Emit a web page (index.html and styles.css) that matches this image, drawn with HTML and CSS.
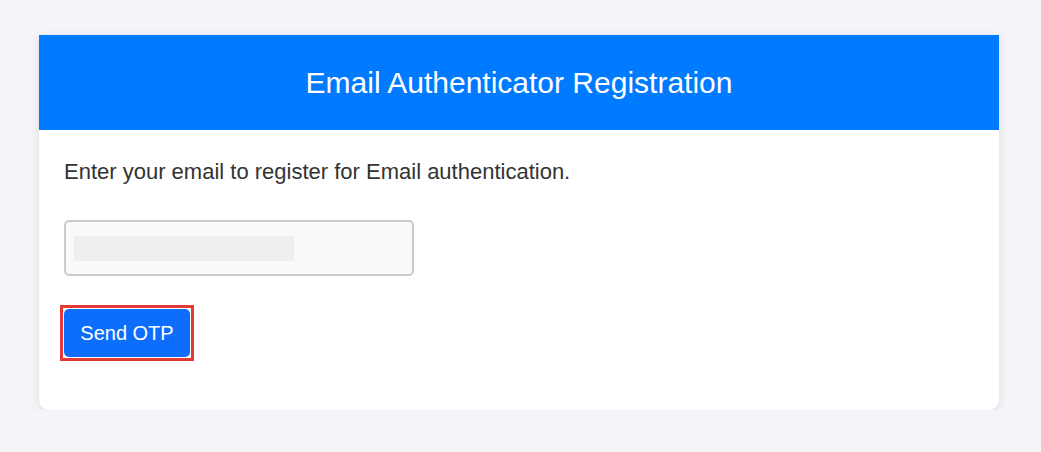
FILE: index.html
```html
<!DOCTYPE html>
<html lang="en">
<head>
<meta charset="utf-8">
<title>Email Authenticator Registration</title>
<link rel="stylesheet" href="styles.css">
</head>
<body>
<div class="card">
  <div class="card-header">
    <h2 class="title">Email Authenticator Registration</h2>
  </div>
  <div class="card-body">
    <p class="intro">Enter your email to register for Email authentication.</p>
    <div class="email-input"><span class="redacted"></span></div>
    <div class="btn-frame"><button class="btn" type="button">Send OTP</button></div>
  </div>
</div>
</body>
</html>
```
FILE: styles.css
```css
html, body {
  margin: 0;
  padding: 0;
}
body {
  background: #f4f4f9;
  font-family: "Liberation Sans", Arial, sans-serif;
  padding: 35px 42px 0 39px;
}
.card {
  width: 960px;
  height: 375px;
  background: #ffffff;
  border-radius: 0 0 10px 10px;
  box-shadow: 0 2px 10px rgba(0, 0, 0, 0.1);
}
.card-header {
  background: #007bff;
  height: 95px;
  display: flex;
  align-items: center;
  justify-content: center;
}
.title {
  margin: 0;
  color: #ffffff;
  font-weight: normal;
  font-size: 30px;
}
.card-body {
  padding: 27px 25px 0 25px;
}
.intro {
  margin: 0;
  font-size: 22px;
  color: #333333;
  line-height: 30px;
}
.email-input {
  margin-top: 33px;
  width: 346px;
  height: 52px;
  border: 2px solid #cccccc;
  border-radius: 5px;
  background: #f9f9f9;
  display: flex;
  align-items: center;
}
.redacted {
  display: block;
  margin-left: 8px;
  width: 220px;
  height: 25px;
  background: #efefef;
}
.btn-frame {
  margin-top: 29px;
  margin-left: -4px;
  width: fit-content;
  border: 3px solid #e53935;
  padding: 1px;
}
.btn {
  display: block;
  width: 126px;
  height: 48px;
  background: #0d6efd;
  color: #ffffff;
  border: none;
  border-radius: 5px;
  font-family: "Liberation Sans", Arial, sans-serif;
  font-size: 20px;
  padding: 0;
}
```
